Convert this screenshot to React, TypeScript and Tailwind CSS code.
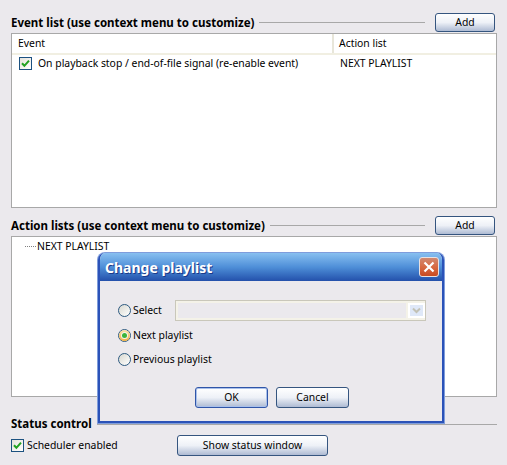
import type { ReactNode } from 'react';

function XpButton({ children, className = '', focused = false }: { children: ReactNode; className?: string; focused?: boolean }) {
  return (
    <button
      className={`flex items-center justify-center rounded-[3px] border bg-gradient-to-b from-white via-[#eef1f7] to-[#aebbd3] text-black ${
        focused ? 'border-[#2f55a8] shadow-[inset_0_0_0_1px_#a9c0ea]' : 'border-[#35557f]'
      } ${className}`}
    >
      {children}
    </button>
  );
}

function XpCheck({ className = '' }: { className?: string }) {
  return (
    <span className={`flex h-[13px] w-[13px] shrink-0 items-center justify-center border border-[#1c5180] bg-gradient-to-br from-[#e4e2da] to-white ${className}`}>
      <svg width="9" height="9" viewBox="0 0 9 9">
        <path d="M1 4.2 L3.4 6.8 L8 1.6" fill="none" stroke="#21a121" strokeWidth="2" />
      </svg>
    </span>
  );
}

function XpRadio({ label, checked = false }: { label: string; checked?: boolean }) {
  return (
    <div className="flex h-[13px] items-center gap-[2px]">
      <span className="relative flex h-[13px] w-[13px] shrink-0 items-center justify-center rounded-full border border-[#2d5a80] bg-gradient-to-br from-[#d8d8d0] to-white">
        {checked && (
          <span className="flex h-[11px] w-[11px] items-center justify-center rounded-full bg-gradient-to-b from-[#fbe2a8] to-[#f3b13e]">
            <span className="h-[7px] w-[7px] rounded-full bg-[#f4f4ec]" />
            <span className="absolute h-[5px] w-[5px] rounded-full bg-[#3cb43c]" />
          </span>
        )}
      </span>
      <span>{label}</span>
    </div>
  );
}

function SectionHead({ title }: { title: string }) {
  return (
    <div className="flex h-[19px] items-center pr-[2px]">
      <span className="text-[11.5px] font-bold text-black">{title}</span>
      <span className="ml-[5px] h-px flex-1 bg-[#a8a8a8]" />
      <XpButton className="ml-[10px] h-[19px] w-[60px]">Add</XpButton>
    </div>
  );
}

export default function App() {
  return (
    <div className="relative h-[465px] w-[507px] overflow-hidden bg-[#ebe9ed] pl-[11px] pr-[10px] pt-[13px] text-[10.4px] leading-[13px] text-black [font-family:'Noto_Sans',sans-serif]">
      <SectionHead title="Event list (use context menu to customize)" />

      <div className="mt-px h-[175px] border border-[#a8a8a8] bg-white">
        <div className="flex h-[21px] border-b-2 border-[#f1efe2] pl-[6px]">
          <div className="flex w-[314px] items-center">Event</div>
          <div className="flex flex-1 items-center border-l-2 border-[#e8e6da] pl-[5px]">Action list</div>
        </div>
        <div className="mt-[2px] flex items-center pl-[7px]">
          <XpCheck className="mr-[6px]" />
          <span className="w-[302px]">On playback stop / end-of-file signal (re-enable event)</span>
          <span>NEXT PLAYLIST</span>
        </div>
      </div>

      <div className="mt-[8px]">
        <SectionHead title="Action lists (use context menu to customize)" />
      </div>

      <div className="mt-px h-[161px] border border-[#a8a8a8] bg-white pl-[13px] pt-[3px]">
        <div className="flex items-center">
          <span className="mr-px w-[11px] border-t border-dotted border-[#808080]" />
          <span>NEXT PLAYLIST</span>
        </div>
      </div>

      <div className="mt-[19px] flex h-[15px] items-center">
        <span className="text-[11.5px] font-bold">Status control</span>
        <span className="ml-[5px] h-px flex-1 translate-y-px bg-[#a8a8a8]" />
      </div>

      <div className="mt-[4px] flex items-start">
        <div className="mt-[4px] flex w-[166px] items-center gap-[3px]">
          <XpCheck />
          <span>Scheduler enabled</span>
        </div>
        <XpButton className="h-[21px] w-[151px]">Show status window</XpButton>
      </div>

      {/* dialog floats over the lists */}
      <div className="absolute left-[98px] top-[253px] flex h-[170px] w-[346px] flex-col overflow-hidden rounded-t-[7px] border-2 border-t-0 border-[#2b52b8] bg-[#ebe9ed] shadow-[0_0_0_1px_#7f9ddc]">
        <div className="flex h-[28px] shrink-0 items-center justify-between bg-gradient-to-b from-[#88c0f0] via-[#4f8fd8] to-[#2450ab] pl-[5px] pr-[3px]">
          <span className="text-[14px] font-bold text-white [text-shadow:1px_1px_0_#1a3a8a]">Change playlist</span>
          <span className="flex h-[20px] w-[20px] items-center justify-center rounded-[3px] border border-[#e8e0e0] bg-gradient-to-b from-[#d08870] via-[#d86a42] to-[#c84a20]">
            <svg width="12" height="12" viewBox="0 0 12 12">
              <path d="M1.5 1.5 L10.5 10.5 M10.5 1.5 L1.5 10.5" stroke="white" strokeWidth="2.2" />
            </svg>
          </span>
        </div>

        <div className="flex flex-1 flex-col pl-[18px] pr-[16px] pt-[19px]">
          <div className="flex h-[21px] items-center">
            <div className="w-[57px]">
              <XpRadio label="Select" />
            </div>
            <div className="flex h-[21px] flex-1 items-stretch border border-[#c9c7ba] bg-[#f4f2e8] p-[2px] pr-0">
              <div className="flex-1 bg-[#ebe9ed]" />
              <div className="ml-[2px] flex w-[17px] items-center justify-center border-2 border-white bg-[#dfe8f8]">
                <svg width="9" height="7" viewBox="0 0 9 7">
                  <path d="M1 1.5 L4.5 5 L8 1.5" fill="none" stroke="#c2c1b5" strokeWidth="2" />
                </svg>
              </div>
            </div>
          </div>
          <div className="mt-[8px]">
            <XpRadio label="Next playlist" checked />
          </div>
          <div className="mt-[11px]">
            <XpRadio label="Previous playlist" />
          </div>
          <div className="mt-[21px] flex justify-center gap-[8px]">
            <XpButton focused className="h-[21px] w-[73px]">OK</XpButton>
            <XpButton className="h-[21px] w-[73px]">Cancel</XpButton>
          </div>
        </div>
      </div>
    </div>
  );
}
